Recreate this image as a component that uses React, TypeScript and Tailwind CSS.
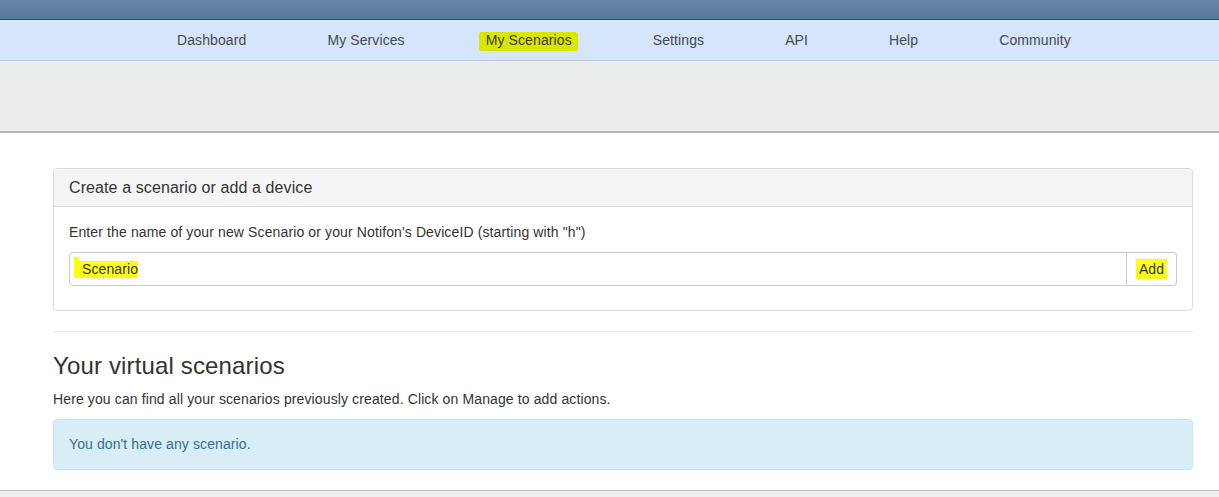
import React from "react";

const navItems = ["Dashboard", "My Services", "My Scenarios", "Settings", "API", "Help", "Community"];

export default function App() {
  return (
    <div className="w-[1219px] h-[497px] overflow-hidden bg-white text-[#333] font-['Liberation_Sans',Arial,sans-serif]">
      {/* top dark bar */}
      <div className="h-[20px] bg-gradient-to-b from-[#6787a6] to-[#56789a] border-b border-[#2f4c6d]" />
      {/* nav */}
      <div className="h-[41px] bg-[#d4e5fc] border-b border-[#b3cbe4] flex items-center pl-[177px] gap-[81px] text-[14px] tracking-[0.1px] text-[#4a4a4a]">
        {navItems.map((n) =>
          n === "My Scenarios" ? (
            <span key={n} className="relative leading-[20px]">
              <span className="absolute left-[-7px] right-[-6px] top-[2px] bottom-[-1px] bg-[#dbe600] rounded-[3px]" />
              <span className="relative text-[#3a3a1a]">{n}</span>
            </span>
          ) : (
            <span key={n} className="leading-[20px]">{n}</span>
          )
        )}
      </div>
      {/* jumbotron */}
      <div className="h-[72px] bg-[#eceeed] border-b-[2px] border-[#b9b9b9]" />
      {/* content */}
      <div className="h-[358px] bg-white pl-[53px] pt-[35px] border-b border-[#c2c2c2]">
        <div className="w-[1140px]">
          <div className="border border-[#dddddd] rounded-[4px]">
            <div className="h-[38px] bg-[#f5f5f5] border-b border-[#dddddd] rounded-t-[4px] pl-[15px] flex items-center text-[16px] tracking-[0.1px] text-[#333]">
              Create a scenario or add a device
            </div>
            <div className="px-[15px] pt-[15px] pb-[24px]">
              <div className="text-[14px] leading-[20px] mb-[10px] tracking-[0.12px]">
                Enter the name of your new Scenario or your Notifon's DeviceID (starting with "h")
              </div>
              <div className="flex h-[34px]">
                <div className="relative flex-1 border border-[#cccccc] rounded-l-[4px] flex items-center pl-[12px] text-[14px] tracking-[0.1px]">
                  <span className="absolute left-[4px] top-[4px] w-[5px] h-[6px] bg-[#ffff14]" />
                  <span className="absolute left-[4px] top-[8px] w-[64px] h-[17px] bg-[#ffff14]" />
                  <span className="relative text-[#333]">Scenario</span>
                </div>
                <div className="w-[50px] border border-l-0 border-[#cccccc] rounded-r-[4px] flex items-center justify-center text-[14px]">
                  <span className="bg-[#ffff14] px-[3px] leading-[20px] text-[#333]">Add</span>
                </div>
              </div>
            </div>
          </div>
          <div className="mt-[20px] h-px bg-[#eeeeee]" />
          <h2 className="mt-[20px] text-[24px] leading-[27px] tracking-[0.15px] text-[#333]">Your virtual scenarios</h2>
          <p className="mt-[10px] text-[14px] leading-[20px] tracking-[0.12px] text-[#333]">
            Here you can find all your scenarios previously created. Click on Manage to add actions.
          </p>
          <div className="mt-[10px] h-[51px] bg-[#d9edf7] border border-[#bce8f1] rounded-[4px] pl-[15px] flex items-center text-[14px] tracking-[0.1px] text-[#31708f]">
            You don't have any scenario.
          </div>
        </div>
      </div>
      <div className="h-[10px] bg-[#eeeeee]" />
    </div>
  );
}
